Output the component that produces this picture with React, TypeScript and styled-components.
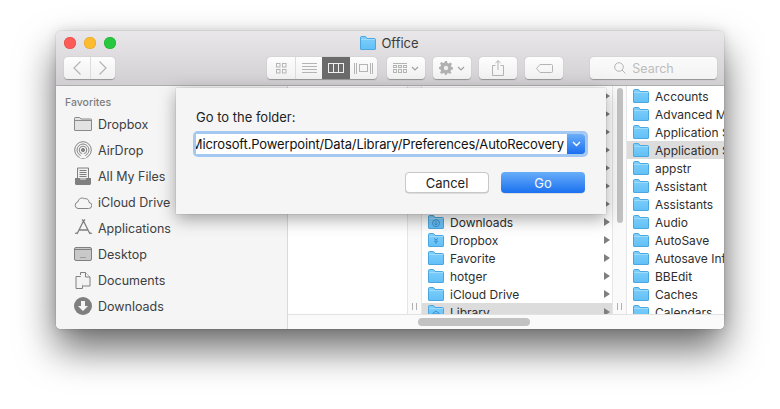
import React from 'react';
import styled, { createGlobalStyle } from 'styled-components';

const GlobalStyle = createGlobalStyle`
    html, body {
        margin: 0;
        padding: 0;
        background: #ffffff;
        overflow: hidden;
    }
    body {
        font-family: 'Inter', 'Liberation Sans', sans-serif;
    }
`;

const Page = styled.div`
    width: 780px;
    height: 409px;
    padding: 31px 0 0 56px;
    box-sizing: border-box;
`;

const Finder = styled.div`
    position: relative;
    width: 668px;
    height: 298px;
    border-radius: 5px;
    overflow: hidden;
    display: flex;
    flex-direction: column;
    background: #fff;
`;

const ShadowWrap = styled.div`
    width: 668px;
    height: 298px;
    border-radius: 5px;
    box-shadow: 0 20px 38px rgba(0, 0, 0, 0.58), 0 0 12px rgba(0, 0, 0, 0.12), 0 0 1px rgba(0, 0, 0, 0.5);
`;

const Chrome = styled.div`
    height: 55px;
    flex: none;
    box-sizing: border-box;
    border-bottom: 1px solid #aeaeae;
    background: linear-gradient(#e9e7e9, #d1cfd1);
    padding: 3px 7px 0 8px;
    display: flex;
    flex-direction: column;
    gap: 5px;
`;

const TitleRow = styled.div`
    display: grid;
    grid-template-columns: 1fr auto 1fr;
    align-items: center;
    height: 18px;
`;

const Lights = styled.div`
    display: flex;
    gap: 8px;
`;

const Light = styled.span<{ $color: string; $edge: string }>`
    width: 12px;
    height: 12px;
    border-radius: 50%;
    background: ${(p) => p.$color};
    box-shadow: inset 0 0 0 0.5px ${(p) => p.$edge};
`;

const Title = styled.div`
    display: flex;
    align-items: center;
    gap: 5px;
    padding-right: 2px;
    font-size: 13px;
    color: #3c3c3c;
`;

const Toolbar = styled.div`
    display: flex;
    align-items: center;
    height: 22px;
`;

const Group = styled.div<{ $left?: number; $clip?: boolean }>`
    display: flex;
    height: 22px;
    margin-left: ${(p) => p.$left || 0}px;
    border-radius: 4px;
    overflow: ${(p) => (p.$clip ? 'hidden' : 'visible')};
    background: linear-gradient(#fdfdfd, #f1f1f1);
    box-shadow: 0 0.5px 1px rgba(0, 0, 0, 0.3);
`;

const Seg = styled.div<{ $w: number; $on?: boolean; $line?: boolean }>`
    width: ${(p) => p.$w}px;
    height: 22px;
    display: flex;
    align-items: center;
    justify-content: center;
    gap: 4px;
    box-sizing: border-box;
    border-left: ${(p) => (p.$line ? '1px solid #dcdcdc' : '0')};
    background: ${(p) => (p.$on ? '#6b6b6b' : 'transparent')};
`;

const SearchBox = styled.div`
    width: 127px;
    height: 22px;
    margin-left: 27px;
    padding-right: 19px;
    box-sizing: border-box;
    border-radius: 4px;
    background: linear-gradient(#fbfbfb, #f3f3f3);
    box-shadow: 0 0.5px 1px rgba(0, 0, 0, 0.3);
    display: flex;
    align-items: center;
    justify-content: center;
    gap: 6px;
    font-size: 12.5px;
    color: #bdbdbd;
`;

const Body = styled.div`
    flex: 1;
    display: flex;
    min-height: 0;
`;

const Sidebar = styled.div`
    width: 232px;
    flex: none;
    box-sizing: border-box;
    background: #f5f5f5;
    border-right: 1px solid #dadada;
    padding: 10px 0 0 9px;
`;

const SideHead = styled.div`
    font-size: 10.5px;
    font-weight: 500;
    line-height: 13px;
    color: #7d7d7d;
    margin-bottom: 2px;
`;

const SideRow = styled.div`
    height: 26px;
    display: flex;
    align-items: center;
    font-size: 12.5px;
    color: #404040;
    gap: 5px;
    padding-left: 8px;
`;

const IconSlot = styled.span`
    width: 20px;
    height: 20px;
    flex: none;
    display: flex;
    align-items: center;
    justify-content: center;
`;

const Browser = styled.div`
    flex: 1;
    min-width: 0;
    display: flex;
    flex-direction: column;
    background: #fff;
`;

const Columns = styled.div`
    flex: 1;
    display: flex;
    min-height: 0;
    overflow: hidden;
    padding-top: 1px;
`;

const Column = styled.div<{ $w?: number }>`
    ${(p) => (p.$w ? `width: ${p.$w}px; flex: none;` : 'flex: 1; min-width: 0;')}
    overflow: hidden;
`;

const Gutter = styled.div`
    width: 15px;
    flex: none;
    position: relative;
    box-sizing: border-box;
    margin-top: -1px;
    background: #fafafa;
    border-left: 1px solid #e6e6e6;
    border-right: 1px solid #e6e6e6;
`;

const Thumb = styled.div`
    position: absolute;
    left: 4px;
    top: 2px;
    width: 6px;
    height: 135px;
    border-radius: 3px;
    background: #c2c2c2;
`;

const Grip = styled.div`
    position: absolute;
    left: 4px;
    bottom: 4px;
    width: 3px;
    height: 7px;
    border-left: 1px solid #b0b0b0;
    border-right: 1px solid #b0b0b0;
`;

const FileRow = styled.div<{ $selected?: boolean }>`
    height: 18px;
    display: flex;
    align-items: center;
    gap: 6px;
    padding-left: 6px;
    font-size: 12px;
    color: #2e2e2e;
    white-space: nowrap;
    background: ${(p) => (p.$selected ? '#dcdcdc' : 'transparent')};
`;

const Arrow = styled.span`
    margin-left: auto;
    margin-right: 2px;
    width: 0;
    height: 0;
    border-left: 6px solid #7f7f7f;
    border-top: 4px solid transparent;
    border-bottom: 4px solid transparent;
`;

const HScroll = styled.div`
    height: 15px;
    flex: none;
    box-sizing: border-box;
    border-top: 1px solid #e2e2e2;
    background: #fafafa;
    padding: 3px 0 0 130px;
`;

const HThumb = styled.div`
    width: 112px;
    height: 8px;
    border-radius: 4px;
    background: #c2c2c2;
`;

const Dialog = styled.div`
    position: absolute;
    left: 120px;
    top: 57px;
    width: 430px;
    height: 126px;
    box-sizing: border-box;
    padding: 21px 21px 0 20px;
    background: #f5f5f5;
    box-shadow: 0 5px 16px rgba(0, 0, 0, 0.35), 0 0 1px rgba(0, 0, 0, 0.3);
    display: flex;
    flex-direction: column;
`;

const DialogLabel = styled.div`
    font-size: 13px;
    line-height: 16px;
    color: #222;
`;

const Combo = styled.div`
    margin-top: 9px;
    height: 20px;
    display: flex;
    border-radius: 2px;
    box-shadow: 0 0 0 3px #a3c8f2;
`;

const ComboText = styled.div`
    flex: 1;
    min-width: 0;
    overflow: hidden;
    background: #fff;
    display: flex;
    justify-content: flex-end;
    align-items: center;
    padding-right: 3px;
    font-size: 13px;
    letter-spacing: -0.14px;
    color: #111;
    white-space: nowrap;
`;

const ComboButton = styled.div`
    width: 18px;
    flex: none;
    display: flex;
    align-items: center;
    justify-content: center;
    border-radius: 0 3px 3px 0;
    background: linear-gradient(#6aaef8, #1a6fef);
`;

const Actions = styled.div`
    margin-top: 18px;
    display: flex;
    justify-content: flex-end;
    gap: 12px;
`;

const DialogButton = styled.div<{ $primary?: boolean }>`
    width: 84px;
    height: 21px;
    border-radius: 4px;
    display: flex;
    align-items: center;
    justify-content: center;
    font-size: 13px;
    box-sizing: border-box;
    color: ${(p) => (p.$primary ? '#f4f8ff' : '#222')};
    background: ${(p) => (p.$primary ? 'linear-gradient(#69aef9, #1a70f0)' : '#fff')};
    border: ${(p) => (p.$primary ? '0' : '1px solid #c8c8c8')};
    box-shadow: 0 0.5px 0.5px rgba(0, 0, 0, 0.2);
`;

const FolderBadge = styled.span`
    position: relative;
    display: flex;
    flex: none;

    svg + svg {
        position: absolute;
        left: 0;
        top: 0;
    }
`;

function Folder() {
    return (
        <svg width="16" height="14" viewBox="0 0 16 14" style={{ flex: 'none' }}>
            <defs>
                <linearGradient id="folder-fill" x1="0" y1="0" x2="0" y2="1">
                    <stop offset="0" stopColor="#7fd0fb" />
                    <stop offset="1" stopColor="#62bff6" />
                </linearGradient>
            </defs>
            <path d="M.5 13V1.4C.5.9.9.5 1.4.5h3.8c.4 0 .6.2.8.5L7 2.500h7.600c.5 0 .9.4.9.9V13c0 .3-.2.5-.5.5H1c-.3 0-.5-.2-.5-.5z" fill="url(#folder-fill)" stroke="#4ca6df" />
            <path d="M1 3.500h14" stroke="#9fdcfb" />
        </svg>
    );
}

function SpecialFolder({ kind }: { kind: 'down' | 'drop' | 'lib' }) {
    return (
        <FolderBadge>
            <Folder />
            <svg width="16" height="14" viewBox="0 0 16 14" fill="none" stroke="#3d8fd0">
                {kind === 'down' && (
                    <>
                        <circle cx="8" cy="8.200" r="3.500" />
                        <path d="M8 6v4M6.500 8.700 8 10l1.500-1.300" />
                    </>
                )}
                {kind === 'drop' && <path d="M6 5.500l2 1.300 2-1.300M6 8l2 1.300L10 8M8 6.800v4" />}
                {kind === 'lib' && <path d="M5 11V8l3-2 3 2v3zM7 8v3M9 8v3" />}
            </svg>
        </FolderBadge>
    );
}

const Chevron = () => (
    <svg width="8" height="5" viewBox="0 0 8 5" fill="none" stroke="#a0a0a0" strokeWidth="1.2">
        <path d="M1 1l3 3 3-3" />
    </svg>
);

const sideIcons: Record<string, React.ReactNode> = {
    Dropbox: (
        <svg width="18" height="14" viewBox="0 0 18 14" fill="#e2e2e2" stroke="#8a8a8a">
            <path d="M.5 13V1.200c0-.4.3-.7.7-.7h4.500l1.300 1.500h9.800c.4 0 .7.3.7.7V13c0 .3-.2.5-.5.5H1c-.3 0-.5-.2-.5-.5z" />
            <path d="M1 3.500h16" fill="none" />
        </svg>
    ),
    AirDrop: (
        <svg width="18" height="18" viewBox="0 0 18 18" fill="none" stroke="#858585">
            <circle cx="9" cy="9" r="8.300" />
            <circle cx="9" cy="9" r="6" />
            <circle cx="9" cy="9" r="3.800" />
            <circle cx="9" cy="9" r="1.600" fill="#858585" />
            <path d="M5.500 17 9 11l3.500 6z" fill="#f5f5f5" stroke="none" />
        </svg>
    ),
    'All My Files': (
        <svg width="16" height="18" viewBox="0 0 16 18">
            <path d="M2.500 1h11v11h-11z" fill="#f0f0f0" stroke="#808080" />
            <path d="M4.500 3.500h7M4.500 5.500h7M4.500 7.500h7M4.500 9.500h7" stroke="#808080" />
            <path d="M0 11h4.500l1 2h5l1-2H16v5.500c0 .8-.7 1.500-1.500 1.500h-13C.7 18 0 17.300 0 16.500z" fill="#808080" />
        </svg>
    ),
    'iCloud Drive': (
        <svg width="18" height="13" viewBox="0 0 18 13" fill="none" stroke="#858585">
            <path d="M4 12.500h10.500a3 3 0 0 0 .5-6 3.500 3.500 0 0 0-4.300-3.800A4.500 4.500 0 0 0 3.800 6a3.300 3.300 0 0 0 .2 6.500z" />
        </svg>
    ),
    Applications: (
        <svg width="19" height="18" viewBox="0 0 19 18" fill="none" stroke="#7f7f7f" strokeWidth="1.3">
            <path d="M9.500 2 3 15M9.500 2 16 15M5.500 11h8M1 14.500l3-1M18 14.500l-3-1M8 .5 9.500 2 11 .5" />
        </svg>
    ),
    Desktop: (
        <svg width="18" height="14" viewBox="0 0 18 14">
            <rect x=".5" y=".5" width="17" height="13" rx="1.500" fill="#c9c9c9" stroke="#808080" />
            <path d="M1 2.500h16" stroke="#808080" />
            <path d="M6.500 10.500h1M8.500 10.500h1M10.500 10.500h1" stroke="#6f6f6f" />
        </svg>
    ),
    Documents: (
        <svg width="16" height="17" viewBox="0 0 16 17" fill="#f3f3f3" stroke="#808080">
            <path d="M1 4.500h6.500v12H1z" />
            <path d="M5.500 3V.5h5L15 5v9H7.500" />
            <path d="M10.500.5V5H15" />
        </svg>
    ),
    Downloads: (
        <svg width="18" height="18" viewBox="0 0 18 18">
            <circle cx="9" cy="9" r="9" fill="#7f7f7f" />
            <path d="M7 4h4v5h3l-5 5-5-5h3z" fill="#f5f5f5" />
        </svg>
    ),
};

const sideItems = ['Dropbox', 'AirDrop', 'All My Files', 'iCloud Drive', 'Applications', 'Desktop', 'Documents', 'Downloads'];

const thirdColumn = [
    'Accounts',
    'Advanced Mail',
    'Application Scripts',
    'Application Support',
    'appstr',
    'Assistant',
    'Assistants',
    'Audio',
    'AutoSave',
    'Autosave Information',
    'BBEdit',
    'Caches',
    'Calendars',
];

function App() {
    return (
        <Page>
            <GlobalStyle />
            <ShadowWrap>
                <Finder>
                    <Chrome>
                        <TitleRow>
                            <Lights>
                                <Light $color="#fc5b57" $edge="#e2463f" />
                                <Light $color="#fdbb2e" $edge="#dfa023" />
                                <Light $color="#27c83f" $edge="#1dad2b" />
                            </Lights>
                            <Title>
                                <Folder />
                                Office
                            </Title>
                            <span />
                        </TitleRow>
                        <Toolbar>
                            <Group>
                                <Seg $w={26}>
                                    <svg width="10" height="16" viewBox="0 0 10 16" fill="none" stroke="#b4b4b4" strokeWidth="1.2"><path d="M8.500 1.500 2 8l6.500 6.500" /></svg>
                                </Seg>
                                <Seg $w={25} $line>
                                    <svg width="10" height="16" viewBox="0 0 10 16" fill="none" stroke="#b4b4b4" strokeWidth="1.2"><path d="M1.500 1.500 8 8l-6.500 6.500" /></svg>
                                </Seg>
                            </Group>
                            <Group $left={152} $clip>
                                <Seg $w={28}>
                                    <svg width="11" height="11" viewBox="0 0 11 11" fill="none" stroke="#b4b4b4"><rect x=".5" y=".5" width="3.500" height="3.500" /><rect x="6.500" y=".5" width="3.500" height="3.500" /><rect x=".5" y="6.500" width="3.500" height="3.500" /><rect x="6.500" y="6.500" width="3.500" height="3.500" /></svg>
                                </Seg>
                                <Seg $w={27} $line>
                                    <svg width="15" height="11" viewBox="0 0 15 11" stroke="#b4b4b4"><path d="M0 .5h15M0 3.500h15M0 6.500h15M0 9.500h15" /></svg>
                                </Seg>
                                <Seg $w={28} $on>
                                    <svg width="16" height="10" viewBox="0 0 16 10" fill="none" stroke="#f0f0f0"><rect x=".5" y=".5" width="15" height="9" /><path d="M5.500 0v10M10.500 0v10" /></svg>
                                </Seg>
                                <Seg $w={27}>
                                    <svg width="19" height="11" viewBox="0 0 19 11" fill="none" stroke="#b4b4b4"><rect x="5.500" y="1.500" width="8" height="7" /><path d="M.5 0v11M2.500 0v11M16.500 0v11M18.500 0v11" /></svg>
                                </Seg>
                            </Group>
                            <Group $left={10}>
                                <Seg $w={38}>
                                    <svg width="14" height="10" viewBox="0 0 14 10" fill="none" stroke="#b4b4b4"><path d="M0 .5h14" /><rect x=".5" y="2.500" width="3" height="2" /><rect x="5.500" y="2.500" width="3" height="2" /><rect x="10.500" y="2.500" width="3" height="2" /><rect x=".5" y="6.500" width="3" height="3" /><rect x="5.500" y="6.500" width="3" height="3" /><rect x="10.500" y="6.500" width="3" height="3" /></svg>
                                    <Chevron />
                                </Seg>
                            </Group>
                            <Group $left={8}>
                                <Seg $w={38}>
                                    <svg width="14" height="14" viewBox="0 0 14 14" fill="#b0b0b0"><path d="M6 0h2l.4 2 1.500.6L11.600 1.500 13 3l-1.100 1.600.6 1.400 1.500.4v2l-1.900.4-.6 1.400L12.500 11.600 11 13l-1.600-1.100-1.400.6L7.600 14H6l-.4-1.500-1.400-.6L2.600 13 1 11.500l1.100-1.600-.6-1.400L0 8V6l1.500-.4.600-1.400L1 2.600 2.500 1l1.700 1.100 1.400-.6z" /><circle cx="7" cy="7" r="2.200" fill="#eeeeee" /></svg>
                                    <Chevron />
                                </Seg>
                            </Group>
                            <Group $left={8}>
                                <Seg $w={38}>
                                    <svg width="12" height="16" viewBox="0 0 12 16" fill="none" stroke="#b4b4b4"><path d="M3.500 5.500h-3v10h11v-10h-3M6 10V.8M3.500 3 6 .6 8.500 3" /></svg>
                                </Seg>
                            </Group>
                            <Group $left={8}>
                                <Seg $w={38}>
                                    <svg width="17" height="9" viewBox="0 0 17 9" fill="none" stroke="#b4b4b4"><path d="M4 .5h11.500c.6 0 1 .4 1 1v6c0 .6-.4 1-1 1H4L.5 4.500z" /></svg>
                                </Seg>
                            </Group>
                            <SearchBox>
                                <svg width="12" height="12" viewBox="0 0 12 12" fill="none" stroke="#b4b4b4"><circle cx="5" cy="5" r="4.300" /><path d="M8 8l3.500 3.500" /></svg>
                                Search
                            </SearchBox>
                        </Toolbar>
                    </Chrome>
                    <Body>
                        <Sidebar>
                            <SideHead>Favorites</SideHead>
                            {sideItems.map((name) => (
                                <SideRow key={name}>
                                    <IconSlot>{sideIcons[name]}</IconSlot>
                                    {name}
                                </SideRow>
                            ))}
                        </Sidebar>
                        <Browser>
                            <Columns>
                                <Column $w={119} />
                                <Gutter>
                                    <Grip />
                                </Gutter>
                                <Column $w={190}>
                                    {Array.from(Array(7).keys()).map((key) => (
                                        <FileRow key={key}>
                                            <Arrow />
                                        </FileRow>
                                    ))}
                                    <FileRow><SpecialFolder kind="down" />Downloads<Arrow /></FileRow>
                                    <FileRow><SpecialFolder kind="drop" />Dropbox<Arrow /></FileRow>
                                    <FileRow><Folder />Favorite<Arrow /></FileRow>
                                    <FileRow><Folder />hotger<Arrow /></FileRow>
                                    <FileRow><Folder />iCloud Drive<Arrow /></FileRow>
                                    <FileRow $selected><SpecialFolder kind="lib" />Library<Arrow /></FileRow>
                                </Column>
                                <Gutter>
                                    <Thumb />
                                    <Grip />
                                </Gutter>
                                <Column>
                                    {thirdColumn.map((name) => (
                                        <FileRow key={name} $selected={name === 'Application Support'}>
                                            <Folder />
                                            {name}
                                        </FileRow>
                                    ))}
                                </Column>
                            </Columns>
                            <HScroll>
                                <HThumb />
                            </HScroll>
                        </Browser>
                    </Body>
                    <Dialog>
                        <DialogLabel>Go to the folder:</DialogLabel>
                        <Combo>
                            <ComboText>Microsoft.Powerpoint/Data/Library/Preferences/AutoRecovery</ComboText>
                            <ComboButton>
                                <svg width="9" height="6" viewBox="0 0 9 6" fill="none" stroke="#fff" strokeWidth="1.400"><path d="M1 1l3.500 3.500L8 1" /></svg>
                            </ComboButton>
                        </Combo>
                        <Actions>
                            <DialogButton>Cancel</DialogButton>
                            <DialogButton $primary>Go</DialogButton>
                        </Actions>
                    </Dialog>
                </Finder>
            </ShadowWrap>
        </Page>
    );
}

export default App;
